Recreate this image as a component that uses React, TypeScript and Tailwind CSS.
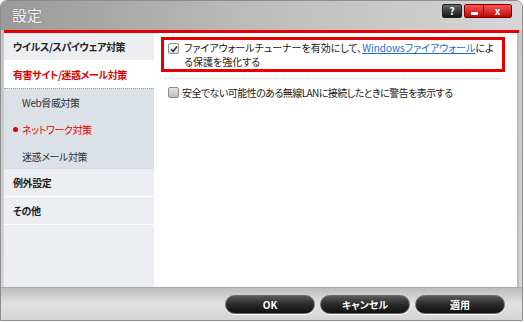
import React from "react";

const font = "font-['Noto_Sans_CJK_JP','Noto_Sans',sans-serif] [font-feature-settings:'palt']";

function Check({ checked }: { checked: boolean }) {
  return (
    <span
      className={
        "flex w-[11px] h-[11px] shrink-0 items-center justify-center rounded-[2px] border border-[#8e8e8e] " +
        (checked ? "bg-gradient-to-b from-[#ffffff] to-[#dedede]" : "bg-gradient-to-b from-[#e4e4e4] to-[#bdbdbd]")
      }
    >
      {checked && (
        <svg width="8" height="8" viewBox="0 0 8 8">
          <path d="M1 4.2 L3.1 6.3 L7 1.6" fill="none" stroke="#333" strokeWidth="1.5" />
        </svg>
      )}
    </span>
  );
}

function FooterButton({ label }: { label: string }) {
  return (
    <div className="w-[90px] h-[19px] rounded-full border border-[#6a6a6a] bg-gradient-to-b from-[#5a5a5a] via-[#2a2a2a] to-[#111] flex items-center justify-center shadow-[0_1px_0_#fff]">
      <span className="text-[10px] font-bold text-white leading-none">{label}</span>
    </div>
  );
}

export default function App() {
  return (
    <div className={"w-[524px] h-[323px] bg-white " + font}>
      <div className="w-[523px] h-[321px] rounded-t-[7px] border border-[#8c8c8c] bg-gradient-to-b from-[#c4c4c4] to-[#d8d8d8] flex flex-col overflow-hidden">
        {/* title bar */}
        <div className="h-[29px] shrink-0 flex items-start justify-between bg-gradient-to-r from-[#9a9a9a] via-[#bdbdbd] to-[#d6d6d6] pl-[11px] pr-[10px]">
          <span className="mt-[5px] text-[15px] leading-[18px] text-[#f4f4f4] [text-shadow:0_0_2px_#777]">設定</span>
          <div className="flex mt-[3px] gap-[2px]">
            <div className="w-[20px] h-[14px] rounded-[2px] border border-[#222] bg-gradient-to-b from-[#6a6a6a] to-[#151515] flex items-center justify-center">
              <span className="text-[10px] font-bold text-white leading-none">?</span>
            </div>
            <div className="flex rounded-[2px] border border-[#7a0000] overflow-hidden">
              <div className="w-[19px] h-[12px] bg-gradient-to-b from-[#ff5050] to-[#b80000] flex items-center justify-center border-r border-[#8a0000]">
                <span className="w-[7px] h-[3px] bg-white mt-[4px]" />
              </div>
              <div className="w-[27px] h-[12px] bg-gradient-to-b from-[#ff5050] to-[#b80000] flex items-center justify-center">
                <span className="text-[10px] font-bold text-white leading-none">x</span>
              </div>
            </div>
          </div>
        </div>
        {/* red line */}
        <div className="mx-[3px] h-[3px] shrink-0 bg-[#e60000]" />
        {/* body */}
        <div className="mx-[3px] flex flex-1 min-h-0 border-r-[2px] border-[#bcbcbc]">
          <div className="w-[150px] shrink-0 bg-[#eceef1] flex flex-col tracking-[-0.4px]">
            <div className="h-[28px] flex items-center pl-[9px] border-b border-white">
              <span className="text-[10px] font-bold text-[#222]">ウイルス/スパイウェア対策</span>
            </div>
            <div className="h-[27px] flex items-center pl-[9px] bg-white">
              <span className="text-[10px] font-bold text-[#e00000]">有害サイト/迷惑メール対策</span>
            </div>
            <div className="bg-[#dce1e8] border-t border-dotted border-[#9aa0a8] flex flex-col">
              <div className="h-[27px] flex items-center pl-[18px]">
                <span className="text-[10px] text-[#333]">Web脅威対策</span>
              </div>
              <div className="h-[27px] flex items-center pl-[9px] gap-[4px]">
                <span className="w-[5px] h-[5px] rounded-full bg-[#e00000]" />
                <span className="text-[10px] text-[#e00000]">ネットワーク対策</span>
              </div>
              <div className="h-[26px] flex items-center pl-[18px]">
                <span className="text-[10px] text-[#333]">迷惑メール対策</span>
              </div>
            </div>
            <div className="h-[28px] flex items-center pl-[9px] border-b border-white">
              <span className="text-[10px] font-bold text-[#222]">例外設定</span>
            </div>
            <div className="h-[28px] flex items-center pl-[9px] border-b border-white">
              <span className="text-[10px] font-bold text-[#222]">その他</span>
            </div>
          </div>
          <div className="flex-1 bg-white pt-[4px] pl-[7px] pr-[12px] flex flex-col">
            <div className="border-[3px] border-[#e60000] pl-[4px] pr-[2px] pt-[1px] pb-0 flex items-start gap-[5px]">
              <div className="mt-[2px]"><Check checked /></div>
              <p className="text-[10px] leading-[14px] text-[#1a1a1a]">
                ファイアウォールチューナーを有効にして、
                <span className="text-[#1f6fd0] underline">Windowsファイアウォール</span>
                によ
                <br />
                る保護を強化する
              </p>
            </div>
            <div className="mx-[4px] mt-[6px] border-t border-dotted border-[#d0d0d0]" />
            <div className="mt-[7px] ml-[7px] flex items-center gap-[3px]">
              <Check checked={false} />
              <span className="text-[10px] leading-[13px] text-[#1a1a1a] tracking-[-0.55px]">
                安全でない可能性のある無線LANに接続したときに警告を表示する
              </span>
            </div>
          </div>
        </div>
        {/* footer */}
        <div className="h-[33px] shrink-0 border-t border-[#a8a8a8] bg-gradient-to-b from-[#bdbdbd] via-[#e2e2e2] to-[#d4d4d4] flex items-start justify-end gap-[5px] pt-[7px] pr-[17px]">
          <FooterButton label="OK" />
          <FooterButton label="キャンセル" />
          <FooterButton label="適用" />
        </div>
      </div>
    </div>
  );
}
